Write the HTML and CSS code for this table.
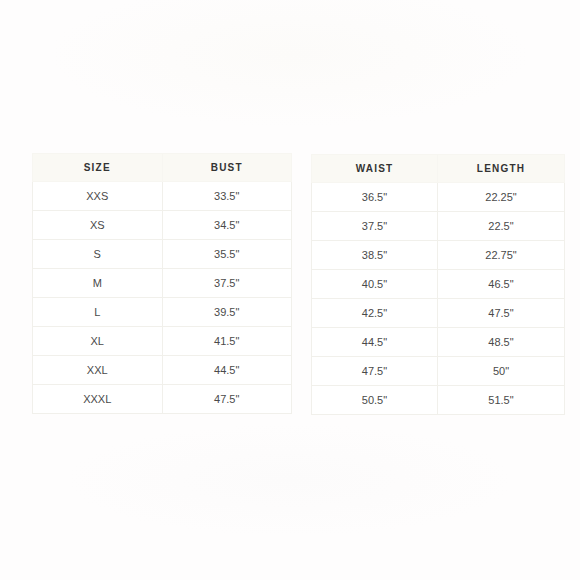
FILE: index.html
```html
<!DOCTYPE html>
<html>
<head>
<meta charset="utf-8">
<link rel="stylesheet" href="styles.css">
</head>
<body>
<div class="page">
  <table class="chart chart-left">
    <thead><tr><th>SIZE</th><th>BUST</th></tr></thead>
    <tbody>
      <tr><td>XXS</td><td>33.5"</td></tr>
      <tr><td>XS</td><td>34.5"</td></tr>
      <tr><td>S</td><td>35.5"</td></tr>
      <tr><td>M</td><td>37.5"</td></tr>
      <tr><td>L</td><td>39.5"</td></tr>
      <tr><td>XL</td><td>41.5"</td></tr>
      <tr><td>XXL</td><td>44.5"</td></tr>
      <tr><td>XXXL</td><td>47.5"</td></tr>
    </tbody>
  </table>
  <table class="chart chart-right">
    <thead><tr><th class="c1">WAIST</th><th>LENGTH</th></tr></thead>
    <tbody>
      <tr><td class="c1">36.5"</td><td>22.25"</td></tr>
      <tr><td class="c1">37.5"</td><td>22.5"</td></tr>
      <tr><td class="c1">38.5"</td><td>22.75"</td></tr>
      <tr><td class="c1">40.5"</td><td>46.5"</td></tr>
      <tr><td class="c1">42.5"</td><td>47.5"</td></tr>
      <tr><td class="c1">44.5"</td><td>48.5"</td></tr>
      <tr><td class="c1">47.5"</td><td>50"</td></tr>
      <tr><td class="c1">50.5"</td><td>51.5"</td></tr>
    </tbody>
  </table>
</div>
</body>
</html>
```
FILE: styles.css
```css
html, body {
  margin: 0;
  padding: 0;
  background: #fefdfd;
}
.page {
  width: 580px;
  height: 580px;
  box-sizing: border-box;
  padding: 153px 0 0 32px;
  display: flex;
  align-items: flex-start;
  gap: 19px;
  font-family: "Liberation Sans", Arial, sans-serif;
  background:
    radial-gradient(ellipse 300px 90px at 290px 55px, #fcfbf9, rgba(254,253,253,0) 80%),
    radial-gradient(ellipse 280px 70px at 290px 480px, #fcfbfb, rgba(254,253,253,0) 80%),
    #fefdfd;
}
.chart {
  border-collapse: collapse;
  table-layout: fixed;
  background: #ffffff;
}
.chart-left { width: 260px; }
.chart-right { width: 254px; margin-top: 1px; }
.chart-right .c1 { width: 125px; }
.chart th {
  height: 27px;
  padding: 0;
  background: #faf9f4;
  color: #333333;
  font-size: 10px;
  font-weight: bold;
  letter-spacing: 1.2px;
  text-align: center;
  border: 1px solid #f7f6f1;
}
.chart td {
  height: 28px;
  padding: 0;
  color: #4a4a4a;
  font-size: 11px;
  text-align: center;
  border: 1px solid #f1f0eb;
}
```
